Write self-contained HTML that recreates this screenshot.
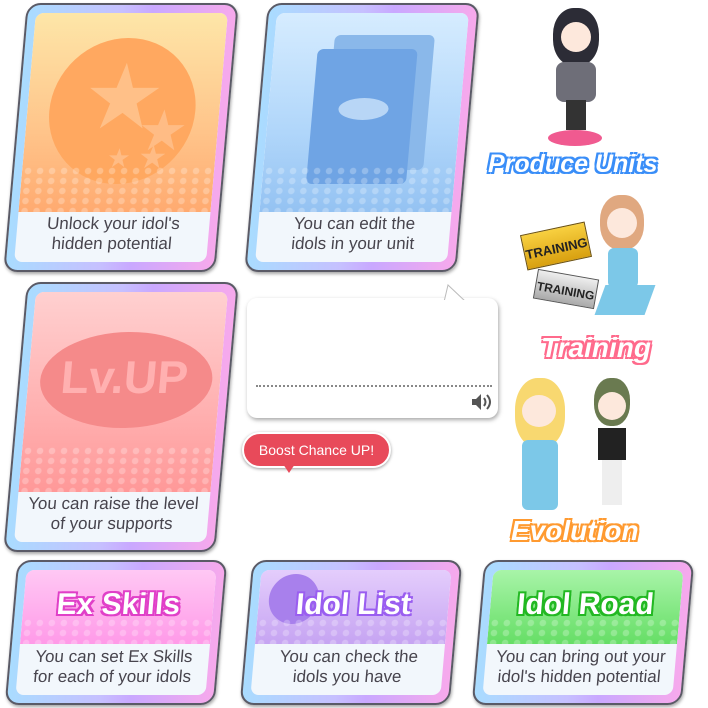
<!DOCTYPE html>
<html><head><meta charset="utf-8"><style>
*{margin:0;padding:0;box-sizing:border-box}
body{width:708px;height:708px;background:#fff;position:relative;overflow:hidden;font-family:"Liberation Sans",sans-serif}
.card{position:absolute;border-radius:14px;background:linear-gradient(90deg,#a9dcff 0%,#c6c0ff 45%,#c9a8ff 60%,#f7a9ec 100%);border:2px solid #5a5a66;box-shadow:1px 2px 3px rgba(0,0,0,.35);transform:skewX(-5deg)}
.in{position:absolute;left:8px;right:8px;top:8px;bottom:8px;border-radius:8px;overflow:hidden;background:#f2f7fc}
.col{position:absolute;left:0;right:0;top:0}
.dots{position:absolute;left:0;right:0;bottom:0;height:46px;background-image:radial-gradient(circle,rgba(255,255,255,.25) 3px,transparent 3.5px);background-size:12px 10px}
.txt{position:absolute;left:0;right:0;bottom:0;text-align:center;color:#48454e;font-size:17px;line-height:20px}
.lbl{position:absolute;font-weight:bold;font-style:italic;color:#fff;white-space:nowrap;font-size:25px}
.big{position:absolute;left:0;right:0;text-align:center;font-weight:bold;font-size:30px;color:#fff}
</style></head><body>

<div class="card" style="left:15px;top:3px;width:212px;height:269px">
 <div class="in">
  <div class="col" style="height:199px;background:linear-gradient(#fde6a8,#ffc48a 60%,#ffaa70)">
   <div style="position:absolute;left:22px;top:25px;width:146px;height:146px;border-radius:50%;background:#ffa860"></div>
   <div style="position:absolute;left:55px;top:40px;font-size:90px;color:#ffc088;line-height:1">★</div>
   <div style="position:absolute;left:112px;top:90px;font-size:56px;color:#ffbc85;line-height:1">★</div>
   <div style="position:absolute;left:84px;top:132px;font-size:26px;color:#ffbc85;line-height:1">★</div>
   <div style="position:absolute;left:115px;top:128px;font-size:32px;color:#ffbc85;line-height:1">★</div>
   <div class="dots"></div>
  </div>
  <div class="txt" style="height:54px;padding-top:6px">Unlock your idol's<br>hidden potential</div>
 </div>
</div>

<div class="card" style="left:256px;top:3px;width:212px;height:269px">
 <div class="in">
  <div class="col" style="height:199px;background:linear-gradient(#d6ecff,#b0d6fa 60%,#94c2f2)">
   <div style="position:absolute;left:60px;top:22px;width:100px;height:135px;border-radius:6px;background:#8ab8ea"></div>
   <div style="position:absolute;left:44px;top:36px;width:100px;height:135px;border-radius:6px;background:#6fa4e4"></div>
   <div style="position:absolute;left:70px;top:85px;width:50px;height:22px;border-radius:50%;background:#b8d6f6"></div>
   <div class="dots"></div>
  </div>
  <div class="txt" style="height:54px;padding-top:6px">You can edit the<br>idols in your unit</div>
 </div>
</div>

<div class="card" style="left:15px;top:282px;width:212px;height:270px">
 <div class="in">
  <div class="col" style="height:200px;background:linear-gradient(#ffd0d0,#ffb0b0 60%,#ff9898)">
   <div style="position:absolute;left:12px;top:40px;width:172px;height:96px;border-radius:50%;background:#f58a8a"></div>
   <div style="position:absolute;left:0;right:0;top:58px;text-align:center;font-size:46px;font-weight:bold;color:#ffb0b0">Lv.UP</div>
   <div class="dots"></div>
  </div>
  <div class="txt" style="height:54px;padding-top:6px">You can raise the level<br>of your supports</div>
 </div>
</div>

<div class="card" style="left:11px;top:560px;width:210px;height:145px">
 <div class="in">
  <div class="col" style="height:74px;background:linear-gradient(#ffc8f4,#ff9ae8)"><div class="dots" style="height:26px"></div></div>
  <div class="big" style="top:18px;text-shadow:0 0 2px #e040c8,2px 2px 0 #e040c8,-2px -2px 0 #e040c8,2px -2px 0 #e040c8,-2px 2px 0 #e040c8">Ex Skills</div>
  <div class="txt" style="height:54px;padding-top:6px">You can set Ex Skills<br>for each of your idols</div>
 </div>
</div>
<div class="card" style="left:246px;top:560px;width:210px;height:145px">
 <div class="in">
  <div class="col" style="height:74px;background:linear-gradient(#e4cdfc,#c6a4f2)">
   <div style="position:absolute;left:10px;top:4px;width:50px;height:50px;border-radius:50%;background:#a880ec"></div>
   <div class="dots" style="height:26px"></div></div>
  <div class="big" style="top:18px;text-shadow:2px 2px 0 #9a5ef0,-2px -2px 0 #9a5ef0,2px -2px 0 #9a5ef0,-2px 2px 0 #9a5ef0">Idol List</div>
  <div class="txt" style="height:54px;padding-top:6px">You can check the<br>idols you have</div>
 </div>
</div>
<div class="card" style="left:478px;top:560px;width:210px;height:145px">
 <div class="in">
  <div class="col" style="height:74px;background:linear-gradient(#a8f4a8,#66de66)"><div class="dots" style="height:26px"></div></div>
  <div class="big" style="top:18px;text-shadow:2px 2px 0 #22b822,-2px -2px 0 #22b822,2px -2px 0 #22b822,-2px 2px 0 #22b822">Idol Road</div>
  <div class="txt" style="height:54px;padding-top:6px">You can bring out your<br>idol's hidden potential</div>
 </div>
</div>

<div style="position:absolute;left:247px;top:298px;width:251px;height:120px;background:#fff;border-radius:10px;box-shadow:1px 2px 4px rgba(0,0,0,.35)"></div>
<svg style="position:absolute;left:438px;top:283px" width="40" height="20"><path d="M6 19 L10 2 L28 19 Z" fill="#fff" stroke="#bbb" stroke-width="1"/><rect x="0" y="17" width="40" height="4" fill="#fff"/></svg>
<div style="position:absolute;left:256px;top:385px;width:236px;border-top:2px dotted #888"></div>
<svg style="position:absolute;left:470px;top:392px" width="22" height="20"><path d="M2 7h4l5-5v16l-5-5H2z" fill="#555"/><path d="M14 6q3 4 0 8M17 3q6 7 0 14" stroke="#555" stroke-width="2" fill="none"/></svg>

<div style="position:absolute;left:242px;top:432px;width:149px;height:36px;border-radius:18px;background:#e84a5a;border:2px solid #fff;box-shadow:0 1px 3px rgba(0,0,0,.4);color:#fff;font-size:14px;line-height:32px;text-align:center">Boost Chance UP!</div>
<div style="position:absolute;left:283px;top:464px;width:0;height:0;border-left:6px solid transparent;border-right:6px solid transparent;border-top:9px solid #e84a5a"></div>

<div style="position:absolute;left:548px;top:130px;width:54px;height:16px;border-radius:50%;background:#f05a90"></div>
<div style="position:absolute;left:553px;top:8px;width:46px;height:58px;border-radius:45%;background:#2c2c36"></div>
<div style="position:absolute;left:561px;top:22px;width:30px;height:30px;border-radius:50%;background:#fde8dc"></div>
<div style="position:absolute;left:556px;top:62px;width:40px;height:40px;border-radius:8px;background:#6e6e78"></div>
<div style="position:absolute;left:566px;top:100px;width:20px;height:30px;background:#333"></div>

<div style="position:absolute;left:600px;top:195px;width:44px;height:55px;border-radius:45%;background:#e0a880"></div>
<div style="position:absolute;left:607px;top:208px;width:30px;height:30px;border-radius:50%;background:#fde8dc"></div>
<div style="position:absolute;left:608px;top:248px;width:30px;height:40px;border-radius:6px;background:#7cc8e8"></div>
<div style="position:absolute;left:600px;top:285px;width:50px;height:30px;background:#7cc8e8;transform:skewX(-20deg)"></div>
<div style="position:absolute;left:523px;top:228px;width:66px;height:36px;background:linear-gradient(#f8d040,#d8a010);border:1px solid #6a5010;transform:rotate(-12deg);font-size:13px;font-weight:bold;color:#222;text-align:center;line-height:40px">TRAINING</div>
<div style="position:absolute;left:535px;top:274px;width:62px;height:30px;background:linear-gradient(#eee,#aaa);border:1px solid #555;transform:rotate(10deg);font-size:12px;font-weight:bold;color:#222;text-align:center;line-height:32px">TRAINING</div>

<div style="position:absolute;left:515px;top:378px;width:50px;height:70px;border-radius:45%;background:#f8d870"></div>
<div style="position:absolute;left:522px;top:395px;width:34px;height:32px;border-radius:50%;background:#fde8dc"></div>
<div style="position:absolute;left:522px;top:440px;width:36px;height:70px;border-radius:6px;background:#7cc8e8"></div>
<div style="position:absolute;left:594px;top:378px;width:36px;height:48px;border-radius:45%;background:#6a7a50"></div>
<div style="position:absolute;left:598px;top:392px;width:28px;height:28px;border-radius:50%;background:#fde8dc"></div>
<div style="position:absolute;left:598px;top:428px;width:28px;height:32px;background:#222"></div>
<div style="position:absolute;left:602px;top:460px;width:20px;height:45px;background:#eee"></div>

<div class="lbl" style="left:488px;top:150px;text-shadow:0 0 2px #3a8ef8,2px 2px 0 #3a8ef8,-2px -2px 0 #3a8ef8,2px -2px 0 #3a8ef8,-2px 2px 0 #3a8ef8">Produce Units</div>
<div class="lbl" style="left:541px;top:332px;font-size:28px;text-shadow:2px 2px 0 #ff6a8c,-2px -2px 0 #ff6a8c,2px -2px 0 #ff6a8c,-2px 2px 0 #ff6a8c">Training</div>
<div class="lbl" style="left:511px;top:515px;font-size:28px;text-shadow:2px 2px 0 #ff9a30,-2px -2px 0 #ff9a30,2px -2px 0 #ff9a30,-2px 2px 0 #ff9a30">Evolution</div>
</body></html>
